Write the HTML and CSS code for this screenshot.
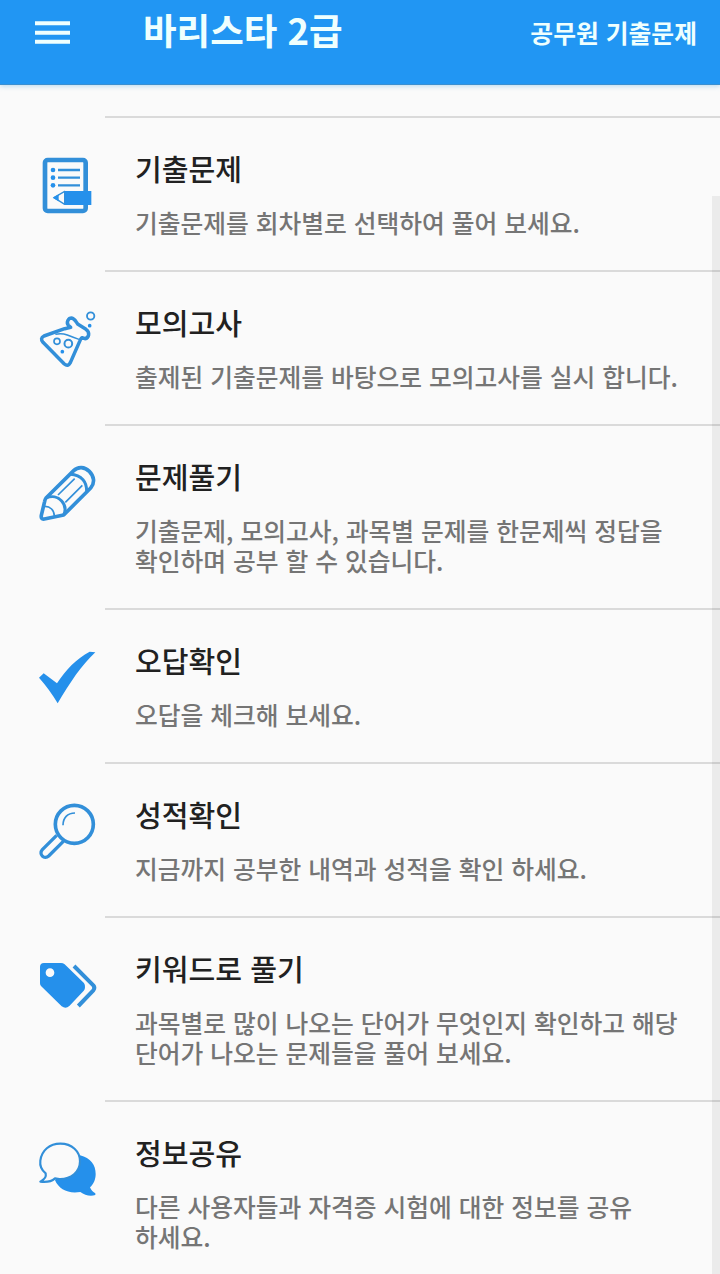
FILE: index.html
```html
<!DOCTYPE html>
<html lang="ko">
<head>
<meta charset="utf-8">
<title>바리스타 2급</title>
<link rel="stylesheet" href="styles.css">
</head>
<body>
<header class="bar">
  <svg class="menu" viewBox="0 0 36 24"><path d="M0 2H36M0 11.7H36M0 21H36" stroke="currentColor" stroke-width="4"/></svg>
  <h1 class="bar-title">바리스타 2급</h1>
  <span class="bar-action">공무원 기출문제</span>
</header>
<main class="list">
  <section class="item">
    <svg class="icon" viewBox="0 3 225 240">
      <rect x="45" y="45" width="122" height="153" rx="8" stroke-width="14"/>
      <path d="M84 75H150M84 98H150M84 121H150" stroke-width="7"/>
      <g class="solid"><circle cx="69" cy="75" r="7"/><circle cx="69" cy="98" r="7"/><circle cx="69" cy="121" r="7"/></g>
      <path d="M72 158L104 139V178Z" stroke-width="4"/>
      <path class="solid" d="M105 138H184V180H105ZM68 158L86 148V169Z"/>
    </svg>
    <div class="text"><h2 class="name">기출문제</h2><p class="desc">기출문제를 회차별로 선택하여 풀어 보세요.</p></div>
  </section>
  <section class="item">
    <svg class="icon" viewBox="0 0 225 240">
      <path d="M122 82L115 76C108 66 115 54 125 54C134 55 138 66 144 73L168 88C181 97 177 114 165 116L156 113Q152 116 149 124L121 188Q114 201 103 192L39 127Q29 115 42 108L104 86Z" stroke-width="10.5"/>
      <path d="M76 103Q94 98 112 105T147 118" stroke-width="4.5"/>
      <circle cx="81" cy="124" r="9" stroke-width="5"/><circle cx="115" cy="131" r="11.5" stroke-width="6"/>
      <circle cx="182" cy="48" r="11" stroke-width="5.5"/>
      <circle class="solid" cx="97" cy="155" r="5.5"/><circle class="solid" cx="179" cy="77" r="5.5"/>
    </svg>
    <div class="text"><h2 class="name">모의고사</h2><p class="desc">출제된 기출문제를 바탕으로 모의고사를 실시 합니다.</p></div>
  </section>
  <section class="item">
    <svg class="icon" viewBox="0 -3 225 240">
      <path d="M48 129L131 47C144 34 164 35 178 49C193 64 195 84 182 99L101 180L43 192Q32 194 34 181L44 139Q45 133 48 129Z" stroke-width="11"/>
      <path d="M49 129C65 122 83 125 95 138C107 151 107 167 101 180M121 58C138 59 150 64 159 74C167 83 170 95 170 108" stroke-width="9"/>
      <path d="M84 120L134 71M106 142L157 91M43 154C60 153 74 166 73 185" stroke-width="5"/>
    </svg>
    <div class="text"><h2 class="name">문제풀기</h2><p class="desc">기출문제, 모의고사, 과목별 문제를 한문제씩 정답을<br>확인하며 공부 할 수 있습니다.</p></div>
  </section>
  <section class="item">
    <svg class="icon" viewBox="0 -6 225 240"><path class="solid" d="M27 113L41 100L81 130C107 89 140 56 179 35L196 37C153 77 121 127 83 190Q60 150 27 113Z"/></svg>
    <div class="text"><h2 class="name">오답확인</h2><p class="desc">오답을 체크해 보세요.</p></div>
  </section>
  <section class="item">
    <svg class="icon" viewBox="0 6 225 240">
      <circle cx="133" cy="103" r="57" stroke-width="11"/>
      <path d="M99 106C99 84 112 69 135 69" stroke-width="5"/>
      <path d="M80 136L37 179C25 193 43 210 56 198L100 154" stroke-width="10"/>
    </svg>
    <div class="text"><h2 class="name">성적확인</h2><p class="desc">지금까지 공부한 내역과 성적을 확인 하세요.</p></div>
  </section>
  <section class="item">
    <svg class="icon" viewBox="0 -12 225 240">
      <path class="solid" fill-rule="evenodd" d="M42 39H93Q99 39 104 43L161 98Q167 105 164 118Q162 123 157 127L118 168Q107 178 95 169L33 108Q30 105 30 100V51Q30 39 42 39ZM60 55A13 13 0 1 0 60 81A13 13 0 1 0 60 55Z"/>
      <path d="M132 48L190 106Q196 113 190 121L145 168" stroke-width="12"/>
    </svg>
    <div class="text"><h2 class="name">키워드로 풀기</h2><p class="desc">과목별로 많이 나오는 단어가 무엇인지 확인하고 해당<br>단어가 나오는 문제들을 풀어 보세요.</p></div>
  </section>
  <section class="item">
    <svg class="icon" viewBox="0 0 225 240">
      <path class="solid" d="M150 76C182 84 197 105 197 132C197 149 190 163 180 172C183 181 190 186 196 190V195C180 200 164 195 151 186C114 192 87 178 75 151Z"/>
      <path class="paper" d="M47 130C34 120 29 108 31 92C35 61 59 41 91 41C126 41 150 64 150 94C150 126 123 148 88 147L75 145C62 157 48 157 31 155C41 150 50 143 47 130Z"/>
      <path d="M47 130C34 120 29 108 31 92C35 61 59 41 91 41C126 41 150 64 150 94C150 126 123 148 88 147L75 145C62 157 48 157 31 155C41 150 50 143 47 130Z" stroke-width="6.5"/>
    </svg>
    <div class="text"><h2 class="name">정보공유</h2><p class="desc">다른 사용자들과 자격증 시험에 대한 정보를 공유<br>하세요.</p></div>
  </section>
</main>
<div class="scrollbar"></div>
</body>
</html>
```
FILE: styles.css
```css
* { box-sizing: border-box; }
body {
  margin: 0;
  height: 1274px;
  overflow: hidden;
  position: relative;
  background: #fafafa;
  font-family: "Noto Sans CJK KR", sans-serif;
}
h1, h2, p { margin: 0; }
.bar {
  display: flex;
  align-items: flex-start;
  height: 85px;
  padding: 0 23px 0 35px;
  background: #2196f3;
  border-bottom: 1px solid #3b8fd0;
  box-shadow: 0 1px 5px rgba(70, 160, 220, .4);
  color: #effffe;
}
.menu { width: 35px; height: 24px; margin-top: 21px; }
.bar-title {
  margin-left: 73px;
  font-size: 36.5px;
  font-weight: 700;
  line-height: 60px;
}
.bar-action {
  margin-left: auto;
  font-size: 24.8px;
  font-weight: 700;
  line-height: 64px;
}
.list { padding-top: 31px; }
.item { display: flex; align-items: flex-start; }
.icon {
  flex: none;
  width: 75px;
  height: 80px;
  margin: 30px 0 0 30px;
  fill: none;
  stroke: #328fd9;
  stroke-linejoin: round;
}
.icon .solid { fill: #2590eb; stroke: none; }
.icon .paper { fill: #fafafa; stroke: none; }
.text {
  flex: 1;
  border-top: 2px solid #dadada;
  padding: 30px 0 33px 30px;
  white-space: nowrap;
}
.name {
  font-size: 29.1px;
  font-weight: 500;
  line-height: 40px;
  color: #212121;
}
.desc {
  margin-top: 19px;
  font-size: 24.75px;
  font-weight: 500;
  line-height: 30px;
  color: #757575;
}
.scrollbar {
  position: absolute;
  top: 196px;
  right: 0;
  bottom: 0;
  width: 8px;
  background: rgba(0, 0, 0, .06);
}
```
